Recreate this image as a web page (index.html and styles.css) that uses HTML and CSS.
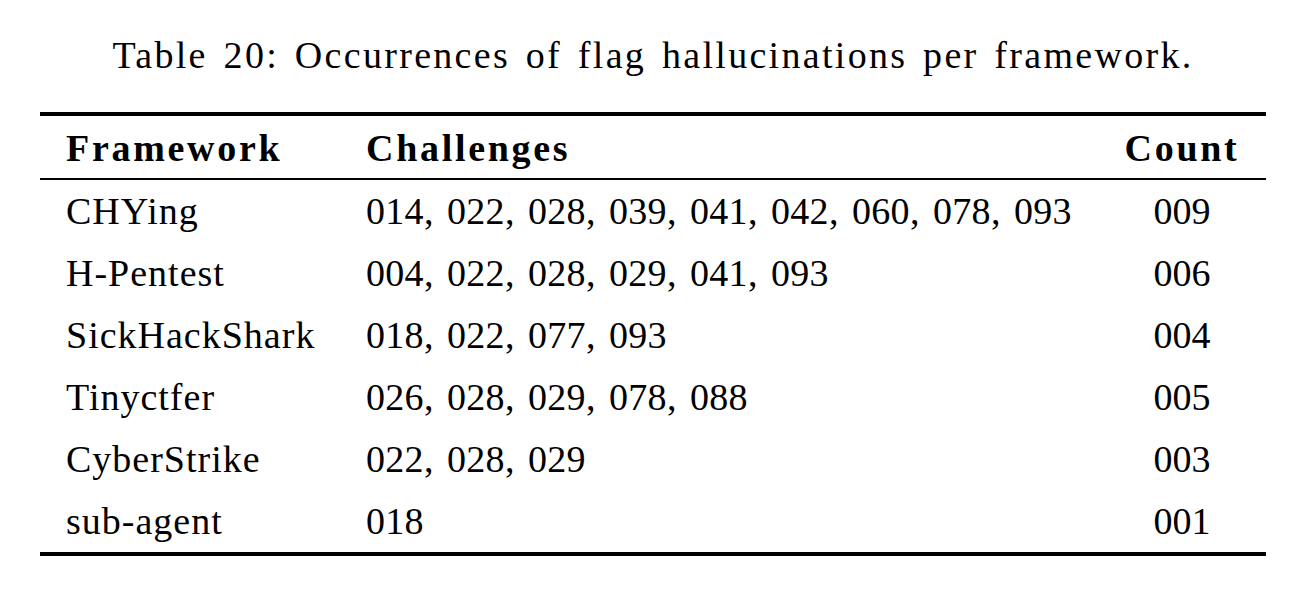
FILE: index.html
```html
<!DOCTYPE html>
<html>
<head>
<meta charset="utf-8">
<link rel="stylesheet" href="styles.css">
</head>
<body>
<div class="caption">Table 20: Occurrences of flag hallucinations per framework.</div>
<table class="tbl">
  <colgroup>
    <col class="c1"><col class="c2"><col class="c3">
  </colgroup>
  <thead>
    <tr><th class="l">Framework</th><th class="l">Challenges</th><th class="c">Count</th></tr>
  </thead>
  <tbody>
    <tr><td class="l name">CHYing</td><td class="l nums">014, 022, 028, 039, 041, 042, 060, 078, 093</td><td class="c">009</td></tr>
    <tr><td class="l name">H-Pentest</td><td class="l nums">004, 022, 028, 029, 041, 093</td><td class="c">006</td></tr>
    <tr><td class="l name">SickHackShark</td><td class="l nums">018, 022, 077, 093</td><td class="c">004</td></tr>
    <tr><td class="l name">Tinyctfer</td><td class="l nums">026, 028, 029, 078, 088</td><td class="c">005</td></tr>
    <tr><td class="l name">CyberStrike</td><td class="l nums">022, 028, 029</td><td class="c">003</td></tr>
    <tr class="last"><td class="l name">sub-agent</td><td class="l nums">018</td><td class="c">001</td></tr>
  </tbody>
</table>
</body>
</html>
```
FILE: styles.css
```css
html, body {
  margin: 0;
  padding: 0;
  background: #fff;
}
body {
  font-family: "Liberation Serif", "Times New Roman", serif;
  font-size: 38px;
  color: #000;
}
.caption {
  padding-top: 35px;
  line-height: 40px;
  text-align: center;
  margin-bottom: 37px;
  letter-spacing: 2.3px;
  word-spacing: 4px;
}
.tbl {
  margin-left: 40px;
  width: 1226px;
  border-collapse: separate;
  border-spacing: 0;
  table-layout: fixed;
}
.c1 { width: 300px; }
.c3 { width: 168px; }
.tbl th, .tbl td {
  padding: 0 26px;
  line-height: 62px;
  white-space: nowrap;
  font-weight: normal;
}
.tbl th {
  font-weight: bold;
  letter-spacing: 2.7px;
  line-height: 60px;
  padding-top: 2px;
  border-top: 4px solid #000;
  border-bottom: 2px solid #000;
}
.tbl .name { letter-spacing: 1px; }
.tbl .nums { letter-spacing: 0.3px; word-spacing: 3.5px; }
.tbl .l { text-align: left; }
.tbl .c { text-align: center; }
.tbl tr.last td {
  border-bottom: 4px solid #000;
}
```
